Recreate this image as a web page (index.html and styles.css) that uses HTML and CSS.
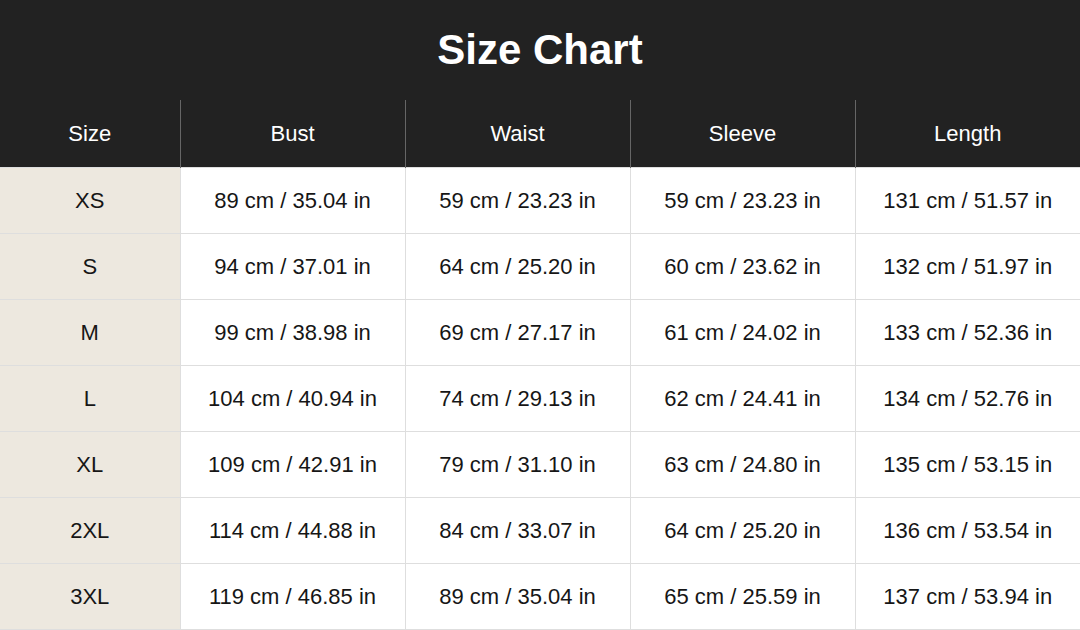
FILE: index.html
```html
<!DOCTYPE html>
<html>
<head>
<meta charset="utf-8">
<link rel="stylesheet" href="styles.css">
</head>
<body>
<div class="chart">
  <div class="title">Size Chart</div>
  <table class="table">
    <colgroup><col class="c-size"><col><col><col><col></colgroup>
    <thead>
      <tr><th>Size</th><th>Bust</th><th>Waist</th><th>Sleeve</th><th>Length</th></tr>
    </thead>
    <tbody>
      <tr><td>XS</td><td>89 cm / 35.04 in</td><td>59 cm / 23.23 in</td><td>59 cm / 23.23 in</td><td>131 cm / 51.57 in</td></tr>
      <tr><td>S</td><td>94 cm / 37.01 in</td><td>64 cm / 25.20 in</td><td>60 cm / 23.62 in</td><td>132 cm / 51.97 in</td></tr>
      <tr><td>M</td><td>99 cm / 38.98 in</td><td>69 cm / 27.17 in</td><td>61 cm / 24.02 in</td><td>133 cm / 52.36 in</td></tr>
      <tr><td>L</td><td>104 cm / 40.94 in</td><td>74 cm / 29.13 in</td><td>62 cm / 24.41 in</td><td>134 cm / 52.76 in</td></tr>
      <tr><td>XL</td><td>109 cm / 42.91 in</td><td>79 cm / 31.10 in</td><td>63 cm / 24.80 in</td><td>135 cm / 53.15 in</td></tr>
      <tr><td>2XL</td><td>114 cm / 44.88 in</td><td>84 cm / 33.07 in</td><td>64 cm / 25.20 in</td><td>136 cm / 53.54 in</td></tr>
      <tr><td>3XL</td><td>119 cm / 46.85 in</td><td>89 cm / 35.04 in</td><td>65 cm / 25.59 in</td><td>137 cm / 53.94 in</td></tr>
    </tbody>
  </table>
</div>
</body>
</html>
```
FILE: styles.css
```css
html, body {
  margin: 0;
  padding: 0;
  background: #ffffff;
}
body {
  font-family: "Liberation Sans", Arial, sans-serif;
  color: #161616;
}
.chart {
  width: 1080px;
}
.title {
  background: #222222;
  color: #ffffff;
  height: 100px;
  display: flex;
  align-items: center;
  justify-content: center;
  font-size: 42px;
  font-weight: bold;
}
.table {
  width: 1080px;
  border-collapse: collapse;
  table-layout: fixed;
}
.c-size {
  width: 180px;
}
.table th {
  background: #222222;
  color: #ffffff;
  font-weight: normal;
  font-size: 22px;
  height: 67px;
  padding: 2px 0 0;
  text-align: center;
  vertical-align: middle;
  border-left: 1px solid #666666;
  box-sizing: border-box;
}
.table th:first-child {
  border-left: none;
}
.table td {
  height: 66px;
  padding: 2px 0 0;
  text-align: center;
  vertical-align: middle;
  font-size: 22px;
  border: 1px solid #dedede;
  box-sizing: border-box;
}
.table td:first-child {
  background: #ede8df;
  border-left: none;
}
.table td:last-child {
  border-right: none;
}
```
